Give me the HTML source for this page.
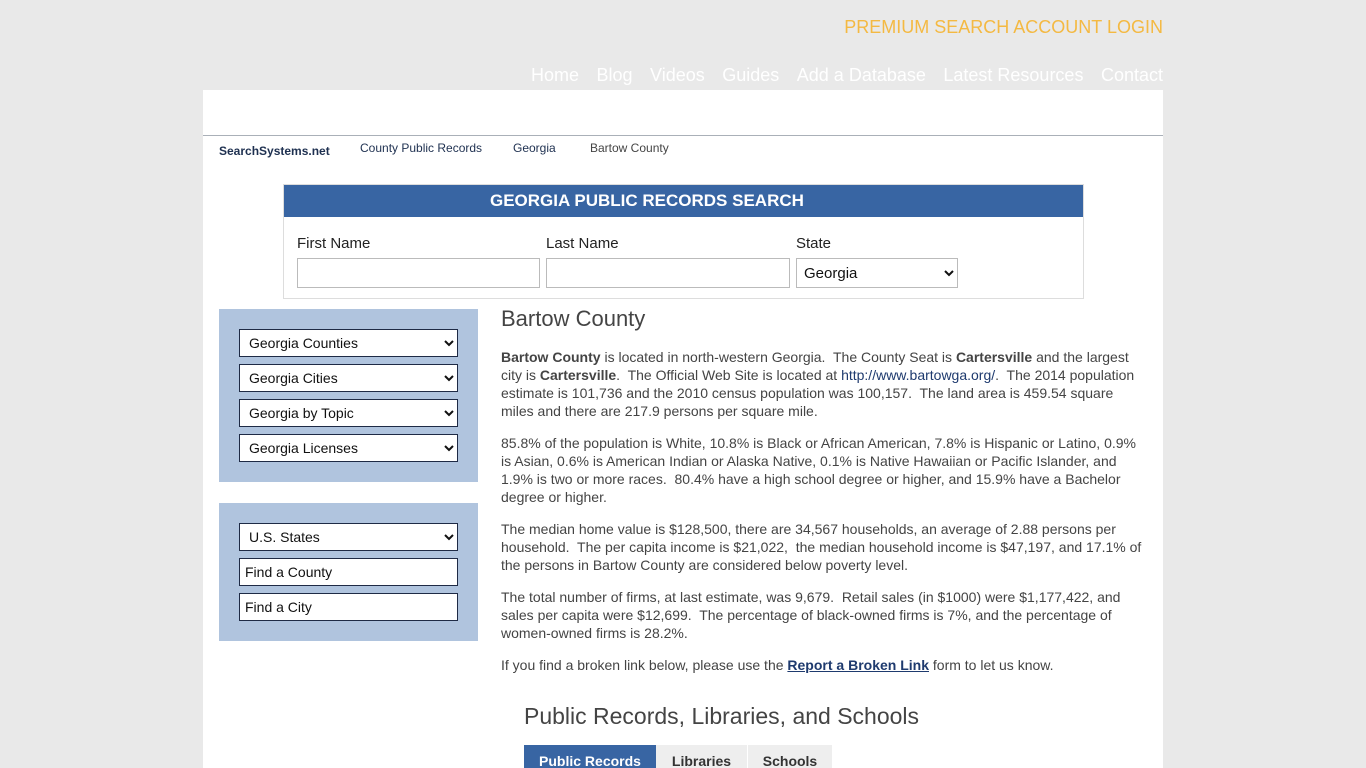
<!DOCTYPE html>
<html style="overflow:hidden"><head><meta charset="utf-8"><style>
html,body{overflow:hidden;height:768px}
body{margin:0;background:#e9e9e9;font-family:"Liberation Sans",Arial,sans-serif;color:#444;width:1366px;position:relative}
.a{position:absolute}
.wrap{left:203px;top:90px;width:960px;height:678px;background:#fff}
.nav a{color:#fff;font-size:18px;margin-left:17.5px;text-decoration:none}
select,.inp{font-family:"Liberation Sans",Arial,sans-serif;font-size:14px;color:#111;background:#fff;box-sizing:border-box}
.side select,.side .inp{position:absolute;left:20px;width:219px;height:28px;border:1px solid #1e2a45;padding-left:5px}
.side .inp{line-height:26px}
p{margin:0 0 14px;font-size:14px;line-height:18px}
</style></head><body>
<div class="a" style="right:203px;top:17px;color:#f4b942;font-size:18px">PREMIUM SEARCH ACCOUNT LOGIN</div>
<div class="a nav" style="right:203px;top:65px"><a>Home</a><a>Blog</a><a>Videos</a><a>Guides</a><a>Add a Database</a><a>Latest Resources</a><a>Contact</a></div>
<div class="a wrap"></div>
<div class="a" style="left:203px;top:135px;width:960px;height:1px;background:#aab0b8"></div>
<div class="a" style="left:219px;top:144px;font-size:12px;font-weight:bold;color:#1e3050">SearchSystems.net</div>
<div class="a" style="left:360px;top:141px;font-size:12px;color:#1e3050">County Public Records</div>
<div class="a" style="left:513px;top:141px;font-size:12px;color:#1e3050">Georgia</div>
<div class="a" style="left:590px;top:141px;font-size:12px;color:#444">Bartow County</div>
<div class="a" style="left:283px;top:184px;width:799px;height:113px;border:1px solid #ddd"></div>
<div class="a" style="left:284px;top:185px;width:799px;height:32px;background:#3865a3"></div>
<div class="a" style="left:490px;top:185px;color:#fff;font-weight:bold;font-size:17px;line-height:32px">GEORGIA PUBLIC RECORDS SEARCH</div>
<div class="a" style="left:297px;top:235px;font-size:15px;color:#222">First Name</div>
<div class="a" style="left:546px;top:235px;font-size:15px;color:#222">Last Name</div>
<div class="a" style="left:796px;top:235px;font-size:15px;color:#222">State</div>
<div class="a" style="left:297px;top:258px;width:243px;height:30px;border:1px solid #bbb;box-sizing:border-box"></div>
<div class="a" style="left:546px;top:258px;width:244px;height:30px;border:1px solid #bbb;box-sizing:border-box"></div>
<select class="a" style="left:796px;top:258px;width:162px;height:30px;border:1px solid #bbb;font-size:15px;padding-left:3px"><option>Georgia</option></select>
<div class="a side" style="left:219px;top:309px;width:259px;height:173px;background:#b0c4de">
<select style="top:20px"><option>Georgia Counties</option></select>
<select style="top:55px"><option>Georgia Cities</option></select>
<select style="top:90px"><option>Georgia by Topic</option></select>
<select style="top:125px"><option>Georgia Licenses</option></select>
</div>
<div class="a side" style="left:219px;top:503px;width:259px;height:138px;background:#b0c4de">
<select style="top:20px"><option>U.S. States</option></select>
<div class="inp" style="top:55px">Find a County</div>
<div class="inp" style="top:90px">Find a City</div>
</div>
<div class="a" style="left:501px;top:306px;font-size:22px;color:#444">Bartow County</div>
<div class="a" style="left:501px;top:348px;width:645px">
<p><b>Bartow County</b> is located in north-western Georgia.&nbsp; The County Seat is <b>Cartersville</b> and the largest city is <b>Cartersville</b>.&nbsp; The Official Web Site is located at <span style="color:#1e3a6e">http://www.bartowga.org/</span>.&nbsp; The 2014 population estimate is 101,736 and the 2010 census population was 100,157.&nbsp; The land area is 459.54 square miles and there are 217.9 persons per square mile.</p>
<p>85.8% of the population is White, 10.8% is Black or African American, 7.8% is Hispanic or Latino, 0.9% is Asian, 0.6% is American Indian or Alaska Native, 0.1% is Native Hawaiian or Pacific Islander, and 1.9% is two or more races.&nbsp; 80.4% have a high school degree or higher, and 15.9% have a Bachelor degree or higher.</p>
<p>The median home value is $128,500, there are 34,567 households, an average of 2.88 persons per household.&nbsp; The per capita income is $21,022,&nbsp; the median household income is $47,197, and 17.1% of the persons in Bartow County are considered below poverty level.</p>
<p>The total number of firms, at last estimate, was 9,679.&nbsp; Retail sales (in $1000) were $1,177,422, and sales per capita were $12,699.&nbsp; The percentage of black-owned firms is 7%, and the percentage of women-owned firms is 28.2%.</p>
<p>If you find a broken link below, please use the <b style="color:#1e3a6e;text-decoration:underline">Report a Broken Link</b> form to let us know.</p>
</div>
<div class="a" style="left:524px;top:703px;font-size:23px;color:#444">Public Records, Libraries, and Schools</div>
<div class="a" style="left:524px;top:745px;width:132px;height:23px;background:#3865a3;color:#fff;font-weight:bold;font-size:14px;text-align:center;line-height:32px">Public Records</div>
<div class="a" style="left:656px;top:745px;width:91px;height:23px;background:#eee;color:#333;font-weight:bold;font-size:14px;text-align:center;line-height:32px">Libraries</div>
<div class="a" style="left:748px;top:745px;width:84px;height:23px;background:#eee;color:#333;font-weight:bold;font-size:14px;text-align:center;line-height:32px">Schools</div>
</body></html>
